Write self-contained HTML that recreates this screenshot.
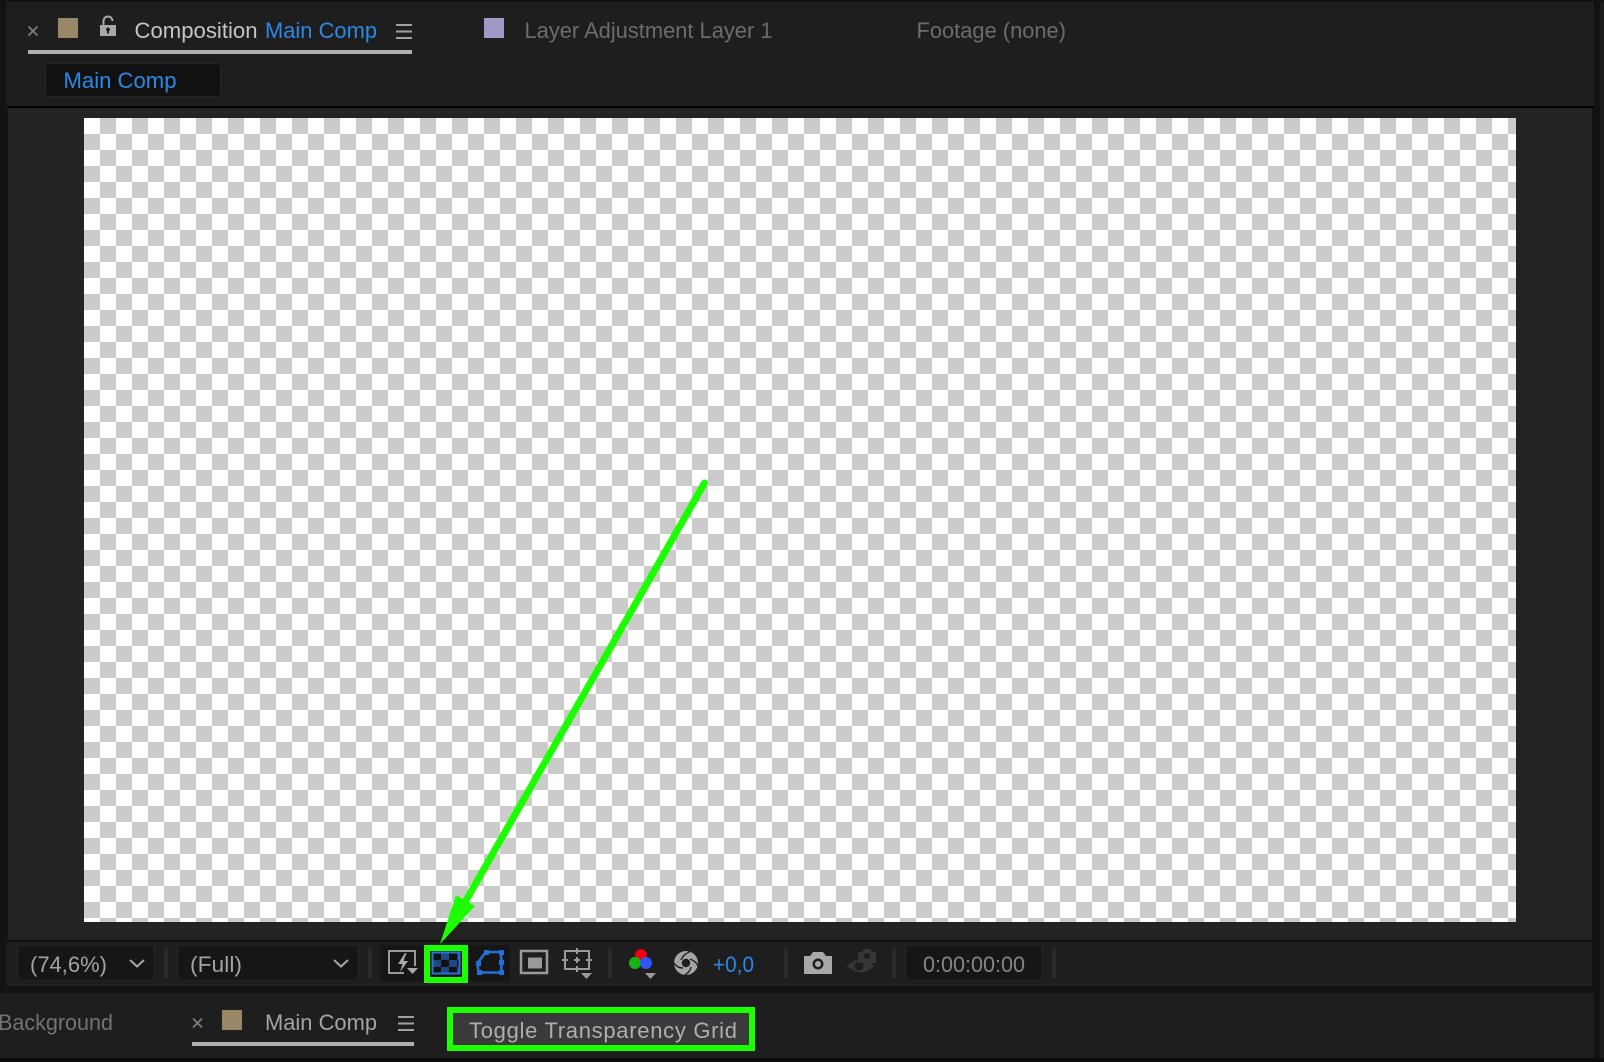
<!DOCTYPE html>
<html><head><meta charset="utf-8">
<style>
html,body{margin:0;padding:0;background:#111;width:1604px;height:1062px;overflow:hidden}
svg{display:block}
text{font-family:"Liberation Sans",sans-serif;font-size:22px}
</style></head><body>
<svg width="1604" height="1062" viewBox="0 0 1604 1062" xmlns="http://www.w3.org/2000/svg">
<defs>
<pattern id="ck" x="84" y="118" width="32" height="32" patternUnits="userSpaceOnUse">
<rect width="32" height="32" fill="#fff"/>
<rect x="16" width="16" height="16" fill="#cbcbcb"/>
<rect y="16" width="16" height="16" fill="#cbcbcb"/>
</pattern>
<pattern id="tg" x="433" y="953" width="16" height="14" patternUnits="userSpaceOnUse">
<rect width="16" height="14" fill="#111"/>
<rect x="8" width="8" height="7" fill="#1d4a85"/>
<rect y="7" width="8" height="7" fill="#1d4a85"/>
</pattern>
</defs>
<rect width="1604" height="1062" fill="#121212"/>
<!-- top panel -->
<rect x="6" y="2" width="1598" height="104" fill="#1e1e1e"/>
<rect x="1594" y="0" width="6" height="1062" fill="#121212"/>
<rect x="1600" y="2" width="4" height="1060" fill="#1c1c1c"/>
<rect x="8" y="106" width="1586" height="2" fill="#000"/>
<rect x="8" y="108" width="1584" height="824" fill="#232323"/>
<rect x="8" y="932" width="1584" height="8" fill="#212121"/>
<rect x="8" y="940" width="1584" height="2" fill="#121212"/>
<rect x="6" y="942" width="1586" height="44" fill="#1e1e1e"/>
<rect x="0" y="993" width="1594" height="65" fill="#1e1e1e"/>
<rect x="0" y="1058" width="1604" height="4" fill="#0c0c0c"/>
<!-- checker -->
<rect x="84" y="118" width="1432" height="804" fill="url(#ck)"/>
<!-- top tabs -->
<path d="M28.500 26.500l9 9M37.500 26.500l-9 9" stroke="#7c7c7c" stroke-width="1.800" fill="none"/>
<rect x="58" y="18" width="20" height="20" fill="#998868"/>
<path d="M103.500 25v-4a4.500 4.500 0 0 1 9 0" stroke="#a8a8a8" stroke-width="2" fill="none"/>
<path fill-rule="evenodd" d="M100 25h16v11h-16zM108 27.500a2 2 0 0 0-1 3.700v2.300h2v-2.300a2 2 0 0 0-1-3.700z" fill="#a8a8a8"/>
<text x="134.500" y="38" fill="#c4c4c4" textLength="123" lengthAdjust="spacingAndGlyphs">Composition</text>
<text x="265" y="38" fill="#2c88e4" textLength="112" lengthAdjust="spacingAndGlyphs">Main Comp</text>
<path d="M396 25h16M396 31.500h16M396 38h16" stroke="#a0a0a0" stroke-width="2" fill="none"/>
<rect x="28" y="50" width="384" height="4" fill="#b0b0b0"/>
<rect x="45.500" y="63.500" width="175" height="33" rx="3" fill="#111" stroke="#262626"/>
<text x="63.500" y="88" fill="#2c88e4" textLength="113" lengthAdjust="spacingAndGlyphs">Main Comp</text>
<rect x="484" y="18" width="20" height="20" fill="#9d9bc3"/>
<text x="524.500" y="38" fill="#6c6c6c" textLength="248" lengthAdjust="spacingAndGlyphs">Layer Adjustment Layer 1</text>
<text x="916.500" y="38" fill="#6c6c6c" textLength="149.500" lengthAdjust="spacingAndGlyphs">Footage (none)</text>
<!-- toolbar left -->
<rect x="17.500" y="945.500" width="137" height="35" rx="3" fill="#161616" stroke="#262626"/>
<text x="30" y="972" fill="#a2a2a2" textLength="77" lengthAdjust="spacingAndGlyphs">(74,6%)</text>
<path d="M130 960l7 6.500 7-6.500" stroke="#a6a6a6" stroke-width="2" fill="none"/>
<rect x="164" y="948" width="4" height="30" fill="#2a2a2a"/>
<rect x="177.500" y="945.500" width="181" height="35" rx="3" fill="#161616" stroke="#262626"/>
<text x="190" y="972" fill="#a2a2a2" textLength="52" lengthAdjust="spacingAndGlyphs">(Full)</text>
<path d="M334 960l7 6.500 7-6.500" stroke="#a6a6a6" stroke-width="2" fill="none"/>
<rect x="368" y="948" width="4" height="30" fill="#2a2a2a"/>
<rect x="380" y="945" width="130" height="36" rx="4" fill="#161616"/>
<!-- fast preview -->
<path d="M415 966v-15h-26v22h15" stroke="#9a9a9a" stroke-width="2" fill="none"/>
<path d="M405 953l-7 11h4.500l-2.500 8 8-11h-4.500l3-8z" fill="#a8a8a8"/>
<path d="M407 968h11l-5.500 6z" fill="#a8a8a8"/>
<!-- transparency grid -->
<rect x="424" y="945" width="44" height="38" fill="#1bff00"/>
<rect x="430" y="951" width="32" height="26" fill="#111"/>
<rect x="433" y="953" width="26" height="20" fill="url(#tg)"/>
<rect x="432.500" y="952.500" width="27" height="21" fill="none" stroke="#2a74d8" stroke-width="2"/>
<!-- mask -->
<path d="M477.500 963l1 9.500h23l-.5-20.500h-15z" fill="none" stroke="#2470d8" stroke-width="2.600"/>
<g fill="#2470d8"><rect x="476" y="961" width="5" height="5"/><rect x="477" y="970" width="5" height="5"/><rect x="499" y="970" width="5" height="5"/><rect x="499" y="950" width="5" height="5"/><rect x="484" y="950" width="5" height="5"/><rect x="499" y="960" width="5" height="5"/></g>
<!-- safe -->
<rect x="521" y="951" width="26" height="22" fill="none" stroke="#9a9a9a" stroke-width="2.500"/>
<rect x="528" y="957.500" width="14" height="11" rx="1" fill="#9a9a9a"/>
<!-- grid guides -->
<rect x="565" y="951" width="24" height="18" fill="none" stroke="#9a9a9a" stroke-width="2"/>
<path d="M577 948v6M577 966v6M562 960h6M586 960h6M574 960h6M577 957v6" stroke="#9a9a9a" stroke-width="2" fill="none"/>
<path d="M581 973h11l-5.500 6z" fill="#9a9a9a"/>
<rect x="608" y="948" width="4" height="30" fill="#2a2a2a"/>
<!-- rgb -->
<circle cx="641" cy="955" r="6" fill="#f00013"/>
<circle cx="635" cy="963" r="6" fill="#16b316"/>
<circle cx="646" cy="963" r="6" fill="#2f55f5"/>
<path d="M645 973h11l-5.500 6z" fill="#9a9a9a"/>
<!-- shutter -->
<circle cx="686" cy="963" r="12" fill="#a4a4a4"/>
<g stroke="#1e1e1e" stroke-width="1.400" fill="none"><path d="M681 960Q684 953 692 951"/><path d="M690 959Q696 961 698 966"/><path d="M691 967Q690 972 685 975"/><path d="M683 968Q677 968 674 963"/></g>
<circle cx="686" cy="963" r="4.200" fill="#1e1e1e"/>
<text x="713" y="972" fill="#2c88e4" textLength="41" lengthAdjust="spacingAndGlyphs">+0,0</text>
<rect x="784" y="948" width="4" height="30" fill="#2a2a2a"/>
<!-- camera -->
<path fill-rule="evenodd" d="M804 956h6l3-4h10l3 4h6v18h-28zM818 958.500a5.500 5.500 0 1 0 .01 0zM818 961a3 3 0 1 1-.01 0z" fill="#a8a8a8"/>
<!-- snapshot eye -->
<path d="M847 966q10-10 20-6 4 2 7 6-13 13-27 0z" fill="#363636"/>
<circle cx="859" cy="966" r="4.500" fill="#1e1e1e"/>
<path fill-rule="evenodd" d="M858 952h4l2-3h6l2 3h4v11h-18zM867 953a3 3 0 1 0 .01 0z" fill="#363636"/>
<rect x="892" y="948" width="4" height="30" fill="#2a2a2a"/>
<rect x="905.500" y="945.500" width="137" height="35" rx="3" fill="#161616" stroke="#262626"/>
<text x="923" y="972" fill="#868686" textLength="102" lengthAdjust="spacingAndGlyphs">0:00:00:00</text>
<rect x="1052" y="948" width="4" height="30" fill="#2a2a2a"/>
<!-- bottom tabs -->
<text x="-2" y="1030" fill="#737373" textLength="115" lengthAdjust="spacingAndGlyphs">Background</text>
<path d="M193 1018.500l9 9M202 1018.500l-9 9" stroke="#7c7c7c" stroke-width="1.800" fill="none"/>
<rect x="222" y="1010" width="20" height="20" fill="#998868"/>
<text x="265" y="1030" fill="#a4a4a4" textLength="112" lengthAdjust="spacingAndGlyphs">Main Comp</text>
<path d="M398 1017h16M398 1023.500h16M398 1030h16" stroke="#a0a0a0" stroke-width="2" fill="none"/>
<rect x="192" y="1042" width="222" height="4" fill="#b0b0b0"/>
<!-- tooltip -->
<rect x="447" y="1007" width="308" height="44" fill="#1bff00"/>
<rect x="453" y="1013" width="296" height="32" fill="#3a3a3a"/>
<text x="469" y="1038" fill="#aeaeae" textLength="268" lengthAdjust="spacing">Toggle Transparency Grid</text>
<!-- arrow -->
<path d="M704.500 483L456 918" stroke="#1bff00" stroke-width="7" stroke-linecap="round" fill="none"/>
<path d="M440 944L456 895 475 906z" fill="#1bff00"/>
</svg>
</body></html>
